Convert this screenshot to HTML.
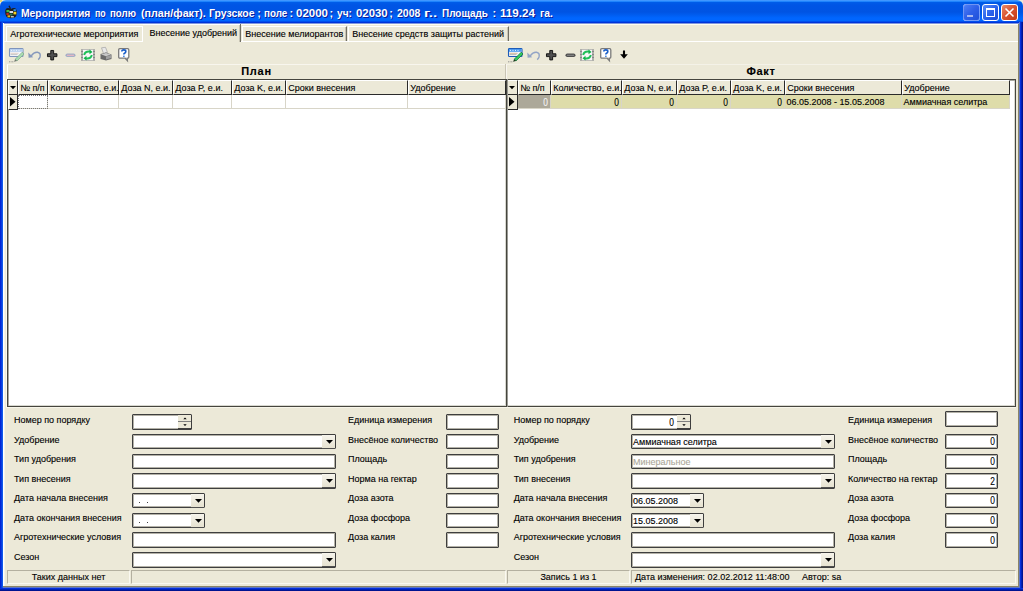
<!DOCTYPE html><html><head><meta charset="utf-8"><style>
html,body{margin:0;padding:0;}
body{width:1023px;height:591px;position:relative;overflow:hidden;background:#ECE9D8;font-family:"Liberation Sans",sans-serif;}
.t{position:absolute;white-space:pre;-webkit-text-stroke:0.12px currentColor;}
.b{position:absolute;box-sizing:border-box;}
svg{position:absolute;overflow:visible;}
</style></head><body>
<div class="b" style="left:0;top:0;width:1023px;height:24px;border-radius:6px 6px 0 0;background:linear-gradient(to bottom,#4A9EFF 0px,#3590FF 1px,#0A78FA 2px,#005CE8 2.5px,#0055E5 5px,#0054E3 12px,#005DF0 15px,#0066FF 18px,#0066FE 21px,#0038DC 22px,#0030D8 22.8px,#8098E0 23.2px,#8098E0 24px);"></div>
<div class="b" style="left:0;top:22px;width:3px;height:569px;background:linear-gradient(to right,#0019CF,#0843E4 60%,#166AEE);"></div>
<div class="b" style="left:1020px;top:22px;width:3px;height:569px;background:linear-gradient(to right,#0838F0,#0020B0 55%,#000C80);"></div>
<div class="b" style="left:1019px;top:22px;width:1px;height:566px;background:#6078C8;"></div>
<div class="b" style="left:0;top:588px;width:1023px;height:3px;background:linear-gradient(to bottom,#0838F0,#0020B0 55%,#000C80);"></div>
<div class="b" style="left:3px;top:587px;width:1017px;height:1px;background:#6078C8;"></div>
<div class="b" style="left:3px;top:24px;width:1016px;height:1px;background:#FFFDF0;"></div>
<div class="b" style="left:3px;top:23px;width:1px;height:564px;background:#FFFFFF;"></div>
<div class="b" style="left:4px;top:25px;width:1px;height:561px;background:#F6F4EA;"></div>
<div class="b" style="left:1018px;top:24px;width:1px;height:563px;background:#8A8468;"></div>
<div class="b" style="left:3px;top:586px;width:1016px;height:1px;background:#8A8468;"></div>
<div class="b" style="left:0;top:0;width:2px;height:2px;background:#E8D870;"></div>
<svg style="left:4px;top:5px" width="14" height="14" viewBox="0 0 14 14">
<path d="M5 0.8 L6.5 3.8" stroke="#1a1a1a" stroke-width="1.3"/>
<path d="M4 3 Q1.2 3 1.2 7 Q1.2 12.5 5 13 Q7 13.3 9 13 Q12.8 12.5 12.8 7.5 Q12.8 3 10 3 Q8 3 7 4 Q6 3 4 3 Z" fill="#1E1E1E"/>
<rect x="2.4" y="5" width="3" height="2.2" fill="#40C040"/>
<rect x="5.5" y="6" width="3.5" height="2" fill="#D8D8E8"/>
<rect x="9.5" y="4.2" width="2.4" height="2" fill="#3090E0"/>
<rect x="9.5" y="6.8" width="2.8" height="2.6" fill="#F0D020"/>
<rect x="2.4" y="8" width="2.4" height="2" fill="#C02818"/>
<rect x="5.5" y="8.5" width="3" height="2" fill="#2A7A50"/>
<rect x="3.5" y="10.3" width="2.5" height="2" fill="#E8B010"/>
<rect x="6.8" y="11" width="3" height="1.5" fill="#B8C0C8"/>
</svg>
<div class="t" style="left:21.3px;top:5px;line-height:16px;font-size:11px;font-weight:bold;color:#fff;text-shadow:1px 1px 0 #0A1E9C;transform:scaleX(0.940);transform-origin:0 50%;-webkit-text-stroke:0;">Мероприятия</div>
<div class="t" style="left:95.0px;top:5px;line-height:16px;font-size:11px;font-weight:bold;color:#fff;text-shadow:1px 1px 0 #0A1E9C;transform:scaleX(0.800);transform-origin:0 50%;-webkit-text-stroke:0;">по</div>
<div class="t" style="left:110.2px;top:5px;line-height:16px;font-size:11px;font-weight:bold;color:#fff;text-shadow:1px 1px 0 #0A1E9C;transform:scaleX(0.881);transform-origin:0 50%;-webkit-text-stroke:0;">полю</div>
<div class="t" style="left:140.6px;top:5px;line-height:16px;font-size:11px;font-weight:bold;color:#fff;text-shadow:1px 1px 0 #0A1E9C;transform:scaleX(0.974);transform-origin:0 50%;-webkit-text-stroke:0;">(план/факт).</div>
<div class="t" style="left:209.3px;top:5px;line-height:16px;font-size:11px;font-weight:bold;color:#fff;text-shadow:1px 1px 0 #0A1E9C;transform:scaleX(0.952);transform-origin:0 50%;-webkit-text-stroke:0;">Грузское</div>
<div class="t" style="left:257.3px;top:5px;line-height:16px;font-size:11px;font-weight:bold;color:#fff;text-shadow:1px 1px 0 #0A1E9C;transform:scaleX(1.000);transform-origin:0 50%;-webkit-text-stroke:0;">;</div>
<div class="t" style="left:263.9px;top:5px;line-height:16px;font-size:11px;font-weight:bold;color:#fff;text-shadow:1px 1px 0 #0A1E9C;transform:scaleX(0.894);transform-origin:0 50%;-webkit-text-stroke:0;">поле</div>
<div class="t" style="left:289.6px;top:5px;line-height:16px;font-size:11px;font-weight:bold;color:#fff;text-shadow:1px 1px 0 #0A1E9C;transform:scaleX(1.000);transform-origin:0 50%;-webkit-text-stroke:0;">:</div>
<div class="t" style="left:295.6px;top:5px;line-height:16px;font-size:11px;font-weight:bold;color:#fff;text-shadow:1px 1px 0 #0A1E9C;transform:scaleX(1.043);transform-origin:0 50%;-webkit-text-stroke:0;">02000</div>
<div class="t" style="left:329.4px;top:5px;line-height:16px;font-size:11px;font-weight:bold;color:#fff;text-shadow:1px 1px 0 #0A1E9C;transform:scaleX(1.000);transform-origin:0 50%;-webkit-text-stroke:0;">;</div>
<div class="t" style="left:336.5px;top:5px;line-height:16px;font-size:11px;font-weight:bold;color:#fff;text-shadow:1px 1px 0 #0A1E9C;transform:scaleX(0.923);transform-origin:0 50%;-webkit-text-stroke:0;">уч:</div>
<div class="t" style="left:355.6px;top:5px;line-height:16px;font-size:11px;font-weight:bold;color:#fff;text-shadow:1px 1px 0 #0A1E9C;transform:scaleX(1.036);transform-origin:0 50%;-webkit-text-stroke:0;">02030</div>
<div class="t" style="left:389.2px;top:5px;line-height:16px;font-size:11px;font-weight:bold;color:#fff;text-shadow:1px 1px 0 #0A1E9C;transform:scaleX(1.000);transform-origin:0 50%;-webkit-text-stroke:0;">;</div>
<div class="t" style="left:397.1px;top:5px;line-height:16px;font-size:11px;font-weight:bold;color:#fff;text-shadow:1px 1px 0 #0A1E9C;transform:scaleX(0.951);transform-origin:0 50%;-webkit-text-stroke:0;">2008</div>
<div class="t" style="left:423.7px;top:5px;line-height:16px;font-size:11px;font-weight:bold;color:#fff;text-shadow:1px 1px 0 #0A1E9C;transform:scaleX(1.379);transform-origin:0 50%;-webkit-text-stroke:0;">г..</div>
<div class="t" style="left:442.1px;top:5px;line-height:16px;font-size:11px;font-weight:bold;color:#fff;text-shadow:1px 1px 0 #0A1E9C;transform:scaleX(0.905);transform-origin:0 50%;-webkit-text-stroke:0;">Площадь</div>
<div class="t" style="left:492.6px;top:5px;line-height:16px;font-size:11px;font-weight:bold;color:#fff;text-shadow:1px 1px 0 #0A1E9C;transform:scaleX(1.000);transform-origin:0 50%;-webkit-text-stroke:0;">:</div>
<div class="t" style="left:499.9px;top:5px;line-height:16px;font-size:11px;font-weight:bold;color:#fff;text-shadow:1px 1px 0 #0A1E9C;transform:scaleX(1.063);transform-origin:0 50%;-webkit-text-stroke:0;">119.24</div>
<div class="t" style="left:539.9px;top:5px;line-height:16px;font-size:11px;font-weight:bold;color:#fff;text-shadow:1px 1px 0 #0A1E9C;transform:scaleX(0.941);transform-origin:0 50%;-webkit-text-stroke:0;">га.</div>
<div class="b" style="left:963px;top:4px;width:17px;height:17px;border-radius:3px;border:1px solid #fff;background:linear-gradient(135deg,#4D7EF5,#2E5FE8 50%,#1F4FD8);"></div>
<div class="b" style="left:967px;top:15px;width:6px;height:2px;background:#A8B8F0;"></div>
<div class="b" style="left:963px;top:4px;width:17px;height:17px;border-radius:3px;border:1px solid rgba(160,190,255,.6);background:linear-gradient(135deg,#4D7EF5,#2E5FE8 50%,#1F4FD8);"></div>
<div class="b" style="left:967px;top:15px;width:6px;height:2px;background:#A8B8F0;"></div>
<div class="b" style="left:982px;top:4px;width:17px;height:17px;border-radius:3px;border:1px solid #fff;background:linear-gradient(135deg,#5A8CF8,#2B63EC 50%,#1A4BD6);"></div>
<div class="b" style="left:986px;top:8px;width:9px;height:9px;border:1px solid #fff;border-top-width:2px;"></div>
<div class="b" style="left:1001px;top:4px;width:17px;height:17px;border-radius:3px;border:1px solid #fff;background:linear-gradient(135deg,#E98A6A,#D8532F 50%,#C23A16);"></div>
<svg style="left:1001px;top:4px" width="17" height="17"><path d="M4.5 4.5 L12.5 12.5 M12.5 4.5 L4.5 12.5" stroke="#fff" stroke-width="1.6"/></svg>
<div class="b" style="left:6px;top:26px;width:137px;height:15px;background:#ECE9D8;border-left:1px solid #fff;border-top:1px solid #fff;border-right:1px solid #fff;"></div>
<div class="t" style="left:10.3px;top:28.38px;line-height:12px;font-size:9px;color:#000;">Агротехнические мероприятия</div>
<div class="b" style="left:242px;top:26px;width:105px;height:15px;background:#ECE9D8;border-left:1px solid #fff;border-top:1px solid #fff;border-right:1px solid #716F64;box-shadow:inset -1px 0 #C8C4B4;"></div>
<div class="t" style="left:245.3px;top:28.38px;line-height:12px;font-size:9px;color:#000;">Внесение мелиорантов</div>
<div class="b" style="left:348px;top:26px;width:161px;height:15px;background:#ECE9D8;border-left:1px solid #fff;border-top:1px solid #fff;border-right:1px solid #716F64;box-shadow:inset -1px 0 #C8C4B4;"></div>
<div class="t" style="left:352.3px;top:28.38px;line-height:12px;font-size:9px;color:#000;">Внесение средств защиты растений</div>
<div class="b" style="left:4px;top:41px;width:1014px;height:1px;background:#FFFFFF;"></div>
<div class="b" style="left:143px;top:24px;width:98px;height:18px;background:#ECE9D8;border-right:1px solid #716F64;box-shadow:inset -1px 0 #C8C4B4;"></div>
<div class="b" style="left:143px;top:24px;width:97px;height:1px;background:#fff;"></div>
<div class="t" style="left:149.5px;top:26.68px;line-height:12px;font-size:9px;color:#000;">Внесение удобрений</div>
<svg style="left:8px;top:47px" width="17" height="16" viewBox="-1 -1 17 16">
<rect x="0.5" y="0.5" width="13.5" height="8" rx="0.8" fill="#F4F6FA" stroke="#7E94BC" stroke-width="1.1"/>
<rect x="1" y="1" width="12.5" height="2.8" fill="#B4CDEE"/>
<circle cx="2.5" cy="2.4" r="0.6" fill="#E8F0FA"/><circle cx="5" cy="2.4" r="0.6" fill="#E8F0FA"/><circle cx="7.5" cy="2.4" r="0.6" fill="#E8F0FA"/><circle cx="10" cy="2.4" r="0.6" fill="#E8F0FA"/>
<rect x="1.5" y="4.8" width="8" height="1" fill="#E0D0C8"/>
<rect x="1.5" y="6.1" width="7" height="1" fill="#C8C8C8"/>
<path d="M6.2 11.2 L13.2 4.2 L15 6 L8 13 Z" fill="#A8DCB0" stroke="#80A888" stroke-width="0.7"/>
<path d="M5 13.8 L6.2 11.2 L8 13 Z" fill="#707870"/>
<path d="M0 13.8 H5" stroke="#808080" stroke-width="0.8" stroke-dasharray="1 0.6"/>
</svg>
<svg style="left:28px;top:50.5px" width="14" height="10" viewBox="0 0 14 10">
<path d="M3.2 4.8 Q6 0.8 9.5 1.2 Q13 1.8 12 6 Q11.6 7.4 10.2 8.6" fill="none" stroke="#8698BC" stroke-width="1.45"/>
<path d="M0.3 1.5 L0.6 6.8 L5.2 6.3 Z" fill="#8698BC"/>
</svg>
<svg style="left:46.5px;top:49.5px" width="10.4" height="10.4" viewBox="0 0 11 11">
<path d="M4 0.5 H7 V4 H10.5 V7 H7 V10.5 H4 V7 H0.5 V4 H4 Z" fill="#505050" stroke="#111" stroke-width="1"/>
</svg>
<svg style="left:65px;top:52.6px" width="11" height="5" viewBox="0 0 11 5">
<rect x="0.5" y="0.5" width="10" height="3.6" rx="1.8" fill="#A4AEC6"/>
<rect x="2" y="1.8" width="7" height="1" fill="#F2B8C4"/>
</svg>
<svg style="left:81px;top:49px" width="14" height="12" viewBox="0 0 14 12">
<rect x="0" y="0" width="14" height="12" fill="#B0B0AC"/>
<rect x="0" y="2" width="2" height="1" fill="#888"/><rect x="0" y="5" width="2" height="1" fill="#888"/><rect x="0" y="8" width="2" height="1" fill="#888"/>
<rect x="12" y="2" width="2" height="1" fill="#888"/><rect x="12" y="5" width="2" height="1" fill="#888"/><rect x="12" y="8" width="2" height="1" fill="#888"/>
<rect x="2" y="0.8" width="10" height="10.4" fill="#F8F6F8"/>
<path d="M3.2 6 Q4 2.5 8 2.6 L9.2 2.6" fill="none" stroke="#20C058" stroke-width="2"/>
<path d="M8.5 0.4 L11.5 3 L8.5 5.2 Z" fill="#10B048"/>
<path d="M10.8 6 Q10 9.5 6 9.4 L4.8 9.4" fill="none" stroke="#20C058" stroke-width="2"/>
<path d="M5.5 6.8 L2.5 9.2 L5.5 11.6 Z" fill="#10B048"/>
</svg>
<svg style="left:100px;top:47px" width="13" height="14" viewBox="0 0 13 14">
<path d="M1.5 0.8 L5.5 0.3 L7.5 5.5 L3.5 6.5 Z" fill="#E8E8E8" stroke="#A0A0A0" stroke-width="0.7"/>
<path d="M0.5 7 L6 5.5 L11.5 7.5 L11.5 12 L6 13.5 L0.5 12 Z" fill="#6A6A6A"/>
<path d="M1 7.2 L6 5.9 L11 7.6 L6 9.2 Z" fill="#C8C8C8"/>
<path d="M6 9.5 L11.2 8 L11.2 11 L6 12.5 Z" fill="#A0A0A0"/>
</svg>
<svg style="left:118px;top:48px" width="13" height="14" viewBox="0 0 13 14">
<path d="M1.8 0.7 H9.6 Q10.8 0.7 10.8 1.9 V9 Q10.8 10.2 9.6 10.2 H9.2 L9.4 12.6 L7.2 10.2 H1.8 Q0.7 10.2 0.7 9 V1.9 Q0.7 0.7 1.8 0.7 Z" fill="#fff" stroke="#7A7A7A" stroke-width="1.3"/>
<path d="M3.8 3.6 Q3.8 1.9 5.8 1.9 Q7.8 1.9 7.8 3.5 Q7.8 4.6 6.6 5.2 Q5.8 5.6 5.8 6.6" fill="none" stroke="#1A5EC8" stroke-width="1.6"/>
<rect x="5.1" y="7.6" width="1.5" height="1.4" fill="#3A7EE0"/>
</svg>
<svg style="left:507px;top:47px" width="17" height="16" viewBox="-1 -1 17 16">
<rect x="0.5" y="0.5" width="13.5" height="8" rx="0.8" fill="#F4F6FA" stroke="#1E5CB8" stroke-width="1.1"/>
<rect x="1" y="1" width="12.5" height="2.8" fill="#4A98F0"/>
<circle cx="2.5" cy="2.4" r="0.6" fill="#D8ECFF"/><circle cx="5" cy="2.4" r="0.6" fill="#D8ECFF"/><circle cx="7.5" cy="2.4" r="0.6" fill="#D8ECFF"/><circle cx="10" cy="2.4" r="0.6" fill="#D8ECFF"/>
<rect x="1.5" y="4.8" width="8" height="1" fill="#D8B898"/>
<rect x="1.5" y="6.1" width="7" height="1" fill="#B8B8B8"/>
<path d="M6.2 11.2 L13.2 4.2 L15 6 L8 13 Z" fill="#30C860" stroke="#107030" stroke-width="0.7"/>
<path d="M5 13.8 L6.2 11.2 L8 13 Z" fill="#1A3A20"/>
<path d="M0 13.8 H5" stroke="#808080" stroke-width="0.8" stroke-dasharray="1 0.6"/>
</svg>
<svg style="left:527px;top:50.5px" width="14" height="10" viewBox="0 0 14 10">
<path d="M3.2 4.8 Q6 0.8 9.5 1.2 Q13 1.8 12 6 Q11.6 7.4 10.2 8.6" fill="none" stroke="#92A4C6" stroke-width="1.45"/>
<path d="M0.3 1.5 L0.6 6.8 L5.2 6.3 Z" fill="#92A4C6"/>
</svg>
<svg style="left:546.3px;top:49.5px" width="10.4" height="10.4" viewBox="0 0 11 11">
<path d="M4 0.5 H7 V4 H10.5 V7 H7 V10.5 H4 V7 H0.5 V4 H4 Z" fill="#505050" stroke="#111" stroke-width="1"/>
</svg>
<svg style="left:565px;top:52.6px" width="11" height="5" viewBox="0 0 11 5">
<rect x="0.5" y="0.5" width="10" height="3.6" rx="1.8" fill="#505050"/>
<rect x="2" y="1.8" width="7" height="1" fill="#8C8C8C"/>
</svg>
<svg style="left:580px;top:49px" width="14" height="12" viewBox="0 0 14 12">
<rect x="0" y="0" width="14" height="12" fill="#B0B0AC"/>
<rect x="0" y="2" width="2" height="1" fill="#888"/><rect x="0" y="5" width="2" height="1" fill="#888"/><rect x="0" y="8" width="2" height="1" fill="#888"/>
<rect x="12" y="2" width="2" height="1" fill="#888"/><rect x="12" y="5" width="2" height="1" fill="#888"/><rect x="12" y="8" width="2" height="1" fill="#888"/>
<rect x="2" y="0.8" width="10" height="10.4" fill="#F8F6F8"/>
<path d="M3.2 6 Q4 2.5 8 2.6 L9.2 2.6" fill="none" stroke="#20C058" stroke-width="2"/>
<path d="M8.5 0.4 L11.5 3 L8.5 5.2 Z" fill="#10B048"/>
<path d="M10.8 6 Q10 9.5 6 9.4 L4.8 9.4" fill="none" stroke="#20C058" stroke-width="2"/>
<path d="M5.5 6.8 L2.5 9.2 L5.5 11.6 Z" fill="#10B048"/>
</svg>
<svg style="left:600px;top:48px" width="13" height="14" viewBox="0 0 13 14">
<path d="M1.8 0.7 H9.6 Q10.8 0.7 10.8 1.9 V9 Q10.8 10.2 9.6 10.2 H9.2 L9.4 12.6 L7.2 10.2 H1.8 Q0.7 10.2 0.7 9 V1.9 Q0.7 0.7 1.8 0.7 Z" fill="#fff" stroke="#7A7A7A" stroke-width="1.3"/>
<path d="M3.8 3.6 Q3.8 1.9 5.8 1.9 Q7.8 1.9 7.8 3.5 Q7.8 4.6 6.6 5.2 Q5.8 5.6 5.8 6.6" fill="none" stroke="#1A5EC8" stroke-width="1.6"/>
<rect x="5.1" y="7.6" width="1.5" height="1.4" fill="#3A7EE0"/>
</svg>
<svg style="left:620px;top:50px" width="9" height="10" viewBox="0 0 9 10">
<path d="M4 0.5 V5" stroke="#000" stroke-width="2.1"/>
<path d="M0.2 4.2 L7.8 4.2 L4 8.7 Z" fill="#000"/>
</svg>
<div class="b" style="left:7px;top:64px;width:499px;height:15px;border-top:1px solid #F8F6EE;border-left:1px solid #fff;"></div>
<div class="t" style="left:7px;top:65.19px;line-height:12px;font-size:11px;color:#000;font-weight:bold;width:499px;text-align:center;letter-spacing:0.7px;">План</div>
<div class="b" style="left:507px;top:64px;width:511px;height:15px;border-top:1px solid #F4F2E8;"></div>
<div class="b" style="left:505px;top:64px;width:1px;height:15px;background:#C8C4B4;"></div>
<div class="b" style="left:506px;top:64px;width:1px;height:15px;background:#F8F6F0;"></div>
<div class="t" style="left:507px;top:65.19px;line-height:12px;font-size:11px;color:#000;font-weight:bold;width:508px;text-align:center;letter-spacing:0.7px;">Факт</div>
<div class="b" style="left:7px;top:79px;width:500px;height:328px;background:#fff;border:1px solid #45453E;box-shadow:inset 1px 1px 0 #A8A8A0, inset -1px -1px 0 #D8D8D0;"></div>
<div class="b" style="left:8px;top:80px;width:10px;height:15px;background:#ECE9D8;border-left:1px solid #fff;border-top:1px solid #fff;border-right:1px solid #2A2A2A;border-bottom:1px solid #2A2A2A;"></div>
<div class="b" style="left:18px;top:80px;width:30px;height:15px;background:#ECE9D8;border-left:1px solid #fff;border-top:1px solid #fff;border-right:1px solid #2A2A2A;border-bottom:1px solid #2A2A2A;"></div>
<div class="t" style="left:20.3px;top:81.78px;line-height:12px;font-size:9px;color:#000;">№ п/п</div>
<div class="b" style="left:48px;top:80px;width:71px;height:15px;background:#ECE9D8;border-left:1px solid #fff;border-top:1px solid #fff;border-right:1px solid #2A2A2A;border-bottom:1px solid #2A2A2A;"></div>
<div class="t" style="left:50.3px;top:81.78px;line-height:12px;font-size:9px;color:#000;">Количество, е.и.</div>
<div class="b" style="left:119px;top:80px;width:54px;height:15px;background:#ECE9D8;border-left:1px solid #fff;border-top:1px solid #fff;border-right:1px solid #2A2A2A;border-bottom:1px solid #2A2A2A;"></div>
<div class="t" style="left:121.3px;top:81.78px;line-height:12px;font-size:9px;color:#000;">Доза N, е.и.</div>
<div class="b" style="left:173px;top:80px;width:59px;height:15px;background:#ECE9D8;border-left:1px solid #fff;border-top:1px solid #fff;border-right:1px solid #2A2A2A;border-bottom:1px solid #2A2A2A;"></div>
<div class="t" style="left:175.3px;top:81.78px;line-height:12px;font-size:9px;color:#000;">Доза P, е.и.</div>
<div class="b" style="left:232px;top:80px;width:54px;height:15px;background:#ECE9D8;border-left:1px solid #fff;border-top:1px solid #fff;border-right:1px solid #2A2A2A;border-bottom:1px solid #2A2A2A;"></div>
<div class="t" style="left:234.3px;top:81.78px;line-height:12px;font-size:9px;color:#000;">Доза K, е.и.</div>
<div class="b" style="left:286px;top:80px;width:122px;height:15px;background:#ECE9D8;border-left:1px solid #fff;border-top:1px solid #fff;border-right:1px solid #2A2A2A;border-bottom:1px solid #2A2A2A;"></div>
<div class="t" style="left:288.3px;top:81.78px;line-height:12px;font-size:9px;color:#000;">Сроки внесения</div>
<div class="b" style="left:408px;top:80px;width:98px;height:15px;background:#ECE9D8;border-left:1px solid #fff;border-top:1px solid #fff;border-right:1px solid #2A2A2A;border-bottom:1px solid #2A2A2A;"></div>
<div class="t" style="left:410.3px;top:81.78px;line-height:12px;font-size:9px;color:#000;">Удобрение</div>
<svg style="left:10px;top:86px" width="6" height="4"><path d="M0 0 H6 L3 3.2 Z" fill="#000"/></svg>
<div class="b" style="left:8px;top:95px;width:10px;height:15px;background:#ECE9D8;border-left:1px solid #fff;border-right:1px solid #2A2A2A;border-bottom:1px solid #2A2A2A;"></div>
<svg style="left:10px;top:97px" width="6" height="10"><path d="M0 0 L5.5 4.8 L0 9.6 Z" fill="#000"/></svg>
<div class="b" style="left:18px;top:95px;width:30px;height:14px;background:#fff;border-right:1px solid #D8D5C8;border-bottom:1px solid #D8D5C8;"></div>
<div class="b" style="left:48px;top:95px;width:71px;height:14px;background:#fff;border-right:1px solid #D8D5C8;border-bottom:1px solid #D8D5C8;"></div>
<div class="b" style="left:119px;top:95px;width:54px;height:14px;background:#fff;border-right:1px solid #D8D5C8;border-bottom:1px solid #D8D5C8;"></div>
<div class="b" style="left:173px;top:95px;width:59px;height:14px;background:#fff;border-right:1px solid #D8D5C8;border-bottom:1px solid #D8D5C8;"></div>
<div class="b" style="left:232px;top:95px;width:54px;height:14px;background:#fff;border-right:1px solid #D8D5C8;border-bottom:1px solid #D8D5C8;"></div>
<div class="b" style="left:286px;top:95px;width:122px;height:14px;background:#fff;border-right:1px solid #D8D5C8;border-bottom:1px solid #D8D5C8;"></div>
<div class="b" style="left:408px;top:95px;width:98px;height:14px;background:#fff;border-right:1px solid #D8D5C8;border-bottom:1px solid #D8D5C8;"></div>
<div class="b" style="left:18px;top:95px;width:30px;height:14px;border:1px dotted #787878;"></div>
<div class="b" style="left:506px;top:79px;width:510px;height:328px;background:#fff;border:1px solid #45453E;box-shadow:inset 1px 1px 0 #A8A8A0, inset -1px -1px 0 #D8D8D0;"></div>
<div class="b" style="left:507px;top:80px;width:11px;height:15px;background:#ECE9D8;border-left:1px solid #fff;border-top:1px solid #fff;border-right:1px solid #2A2A2A;border-bottom:1px solid #2A2A2A;"></div>
<div class="b" style="left:518px;top:80px;width:33px;height:15px;background:#ECE9D8;border-left:1px solid #fff;border-top:1px solid #fff;border-right:1px solid #2A2A2A;border-bottom:1px solid #2A2A2A;"></div>
<div class="t" style="left:520.3px;top:81.78px;line-height:12px;font-size:9px;color:#000;">№ п/п</div>
<div class="b" style="left:551px;top:80px;width:71px;height:15px;background:#ECE9D8;border-left:1px solid #fff;border-top:1px solid #fff;border-right:1px solid #2A2A2A;border-bottom:1px solid #2A2A2A;"></div>
<div class="t" style="left:553.3px;top:81.78px;line-height:12px;font-size:9px;color:#000;">Количество, е.и.</div>
<div class="b" style="left:622px;top:80px;width:55px;height:15px;background:#ECE9D8;border-left:1px solid #fff;border-top:1px solid #fff;border-right:1px solid #2A2A2A;border-bottom:1px solid #2A2A2A;"></div>
<div class="t" style="left:624.3px;top:81.78px;line-height:12px;font-size:9px;color:#000;">Доза N, е.и.</div>
<div class="b" style="left:677px;top:80px;width:54px;height:15px;background:#ECE9D8;border-left:1px solid #fff;border-top:1px solid #fff;border-right:1px solid #2A2A2A;border-bottom:1px solid #2A2A2A;"></div>
<div class="t" style="left:679.3px;top:81.78px;line-height:12px;font-size:9px;color:#000;">Доза P, е.и.</div>
<div class="b" style="left:731px;top:80px;width:54px;height:15px;background:#ECE9D8;border-left:1px solid #fff;border-top:1px solid #fff;border-right:1px solid #2A2A2A;border-bottom:1px solid #2A2A2A;"></div>
<div class="t" style="left:733.3px;top:81.78px;line-height:12px;font-size:9px;color:#000;">Доза K, е.и.</div>
<div class="b" style="left:785px;top:80px;width:117px;height:15px;background:#ECE9D8;border-left:1px solid #fff;border-top:1px solid #fff;border-right:1px solid #2A2A2A;border-bottom:1px solid #2A2A2A;"></div>
<div class="t" style="left:787.3px;top:81.78px;line-height:12px;font-size:9px;color:#000;">Сроки внесения</div>
<div class="b" style="left:902px;top:80px;width:108px;height:15px;background:#ECE9D8;border-left:1px solid #fff;border-top:1px solid #fff;border-right:1px solid #2A2A2A;border-bottom:1px solid #2A2A2A;"></div>
<div class="t" style="left:904.3px;top:81.78px;line-height:12px;font-size:9px;color:#000;">Удобрение</div>
<svg style="left:509px;top:86px" width="6" height="4"><path d="M0 0 H6 L3 3.2 Z" fill="#000"/></svg>
<div class="b" style="left:507px;top:95px;width:11px;height:15px;background:#ECE9D8;border-left:1px solid #fff;border-right:1px solid #2A2A2A;border-bottom:1px solid #2A2A2A;"></div>
<svg style="left:509px;top:97px" width="6" height="10"><path d="M0 0 L5.5 4.8 L0 9.6 Z" fill="#000"/></svg>
<div class="b" style="left:518px;top:95px;width:33px;height:14px;background:#ACA899;border-right:1px solid #D8D5C8;border-bottom:1px solid #D8D5C8;"></div>
<div class="t" style="left:518px;top:96.26px;line-height:12px;font-size:10.5px;color:#F4F4F4;width:30px;text-align:right;transform:scaleX(0.8);transform-origin:100% 50%;">0</div>
<div class="b" style="left:551px;top:95px;width:71px;height:14px;background:#DEDCAA;border-right:1px solid #D8D5C8;border-bottom:1px solid #D8D5C8;"></div>
<div class="t" style="left:551px;top:96.26px;line-height:12px;font-size:10.5px;color:#000;width:68px;text-align:right;transform:scaleX(0.8);transform-origin:100% 50%;">0</div>
<div class="b" style="left:622px;top:95px;width:55px;height:14px;background:#DEDCAA;border-right:1px solid #D8D5C8;border-bottom:1px solid #D8D5C8;"></div>
<div class="t" style="left:622px;top:96.26px;line-height:12px;font-size:10.5px;color:#000;width:52px;text-align:right;transform:scaleX(0.8);transform-origin:100% 50%;">0</div>
<div class="b" style="left:677px;top:95px;width:54px;height:14px;background:#DEDCAA;border-right:1px solid #D8D5C8;border-bottom:1px solid #D8D5C8;"></div>
<div class="t" style="left:677px;top:96.26px;line-height:12px;font-size:10.5px;color:#000;width:51px;text-align:right;transform:scaleX(0.8);transform-origin:100% 50%;">0</div>
<div class="b" style="left:731px;top:95px;width:54px;height:14px;background:#DEDCAA;border-right:1px solid #D8D5C8;border-bottom:1px solid #D8D5C8;"></div>
<div class="t" style="left:731px;top:96.26px;line-height:12px;font-size:10.5px;color:#000;width:51px;text-align:right;transform:scaleX(0.8);transform-origin:100% 50%;">0</div>
<div class="b" style="left:785px;top:95px;width:117px;height:14px;background:#DEDCAA;border-right:1px solid #D8D5C8;border-bottom:1px solid #D8D5C8;"></div>
<div class="t" style="left:786.5px;top:96.48px;line-height:12px;font-size:9px;color:#000;">06.05.2008 - 15.05.2008</div>
<div class="b" style="left:902px;top:95px;width:108px;height:14px;background:#DEDCAA;border-right:1px solid #D8D5C8;border-bottom:1px solid #D8D5C8;"></div>
<div class="t" style="left:903.5px;top:96.48px;line-height:12px;font-size:9px;color:#000;">Аммиачная селитра</div>
<div class="b" style="left:507px;top:79px;width:1px;height:328px;background:#9A9A94;"></div>
<div class="b" style="left:507px;top:95px;width:1px;height:15px;background:#9A9890;"></div>
<div class="b" style="left:6px;top:79px;width:1px;height:329px;background:#FBFAF0;"></div>
<div class="b" style="left:6px;top:407px;width:1010px;height:1px;background:#F8F6EA;"></div>
<div class="t" style="left:14px;top:414.18px;line-height:12px;font-size:9px;color:#000;">Номер по порядку</div>
<div class="t" style="left:14px;top:433.73px;line-height:12px;font-size:9px;color:#000;">Удобрение</div>
<div class="t" style="left:14px;top:453.28px;line-height:12px;font-size:9px;color:#000;">Тип удобрения</div>
<div class="t" style="left:14px;top:472.83px;line-height:12px;font-size:9px;color:#000;">Тип внесения</div>
<div class="t" style="left:14px;top:492.38px;line-height:12px;font-size:9px;color:#000;">Дата начала внесения</div>
<div class="t" style="left:14px;top:511.93px;line-height:12px;font-size:9px;color:#000;">Дата окончания внесения</div>
<div class="t" style="left:14px;top:531.48px;line-height:12px;font-size:9px;color:#000;">Агротехнические условия</div>
<div class="t" style="left:14px;top:551.03px;line-height:12px;font-size:9px;color:#000;">Сезон</div>
<div class="b" style="left:132px;top:414.0px;width:60px;height:15.6px;background:#fff;border:1px solid #3E3E3E;box-shadow:inset 0 0 0 1px #B4B2A8;border-radius:1px;"></div>
<div class="b" style="left:178px;top:415.0px;width:13px;height:7px;background:#ECE9D8;border-bottom:1px solid #808080;"></div>
<div class="b" style="left:178px;top:422.0px;width:13px;height:7px;background:#ECE9D8;border-bottom:1px solid #404040;"></div>
<svg style="left:183px;top:417.0px" width="4" height="3"><path d="M0.3 2.2 H3.7 L2 0.4 Z" fill="#000"/></svg>
<svg style="left:183px;top:424.0px" width="4" height="3"><path d="M0.3 0.3 H3.7 L2 2.1 Z" fill="#000"/></svg>
<div class="b" style="left:132px;top:433.8px;width:204px;height:15.6px;background:#fff;border:1px solid #3E3E3E;box-shadow:inset 0 0 0 1px #B4B2A8;border-radius:1px;"></div>
<div class="b" style="left:322px;top:434.8px;width:13px;height:14px;background:linear-gradient(to bottom,#F6F4EC,#E6E2D0);border-bottom:1px solid #505050;"></div>
<svg style="left:326px;top:439.8px" width="7" height="4"><path d="M0 0 H7 L3.5 3.8 Z" fill="#000"/></svg>
<div class="b" style="left:132px;top:453.5px;width:204px;height:15.6px;background:#fff;border:1px solid #3E3E3E;box-shadow:inset 0 0 0 1px #B4B2A8;border-radius:1px;"></div>
<div class="b" style="left:132px;top:473.2px;width:204px;height:15.6px;background:#fff;border:1px solid #3E3E3E;box-shadow:inset 0 0 0 1px #B4B2A8;border-radius:1px;"></div>
<div class="b" style="left:322px;top:474.2px;width:13px;height:14px;background:linear-gradient(to bottom,#F6F4EC,#E6E2D0);border-bottom:1px solid #505050;"></div>
<svg style="left:326px;top:479.2px" width="7" height="4"><path d="M0 0 H7 L3.5 3.8 Z" fill="#000"/></svg>
<div class="b" style="left:132px;top:492.9px;width:73px;height:15.6px;background:#fff;border:1px solid #3E3E3E;box-shadow:inset 0 0 0 1px #B4B2A8;border-radius:1px;"></div>
<div class="b" style="left:191px;top:493.9px;width:13px;height:14px;background:linear-gradient(to bottom,#F6F4EC,#E6E2D0);border-bottom:1px solid #505050;"></div>
<svg style="left:195px;top:498.9px" width="7" height="4"><path d="M0 0 H7 L3.5 3.8 Z" fill="#000"/></svg>
<div class="b" style="left:132px;top:512.6px;width:73px;height:15.6px;background:#fff;border:1px solid #3E3E3E;box-shadow:inset 0 0 0 1px #B4B2A8;border-radius:1px;"></div>
<div class="b" style="left:191px;top:513.6px;width:13px;height:14px;background:linear-gradient(to bottom,#F6F4EC,#E6E2D0);border-bottom:1px solid #505050;"></div>
<svg style="left:195px;top:518.6px" width="7" height="4"><path d="M0 0 H7 L3.5 3.8 Z" fill="#000"/></svg>
<div class="b" style="left:132px;top:532.3px;width:204px;height:15.6px;background:#fff;border:1px solid #3E3E3E;box-shadow:inset 0 0 0 1px #B4B2A8;border-radius:1px;"></div>
<div class="b" style="left:132px;top:552.0px;width:204px;height:15.6px;background:#fff;border:1px solid #3E3E3E;box-shadow:inset 0 0 0 1px #B4B2A8;border-radius:1px;"></div>
<div class="b" style="left:322px;top:553.0px;width:13px;height:14px;background:linear-gradient(to bottom,#F6F4EC,#E6E2D0);border-bottom:1px solid #505050;"></div>
<svg style="left:326px;top:558.0px" width="7" height="4"><path d="M0 0 H7 L3.5 3.8 Z" fill="#000"/></svg>
<div class="b" style="left:139px;top:501.9px;width:1px;height:1px;background:#404040;"></div>
<div class="b" style="left:147px;top:501.9px;width:1px;height:1px;background:#404040;"></div>
<div class="b" style="left:139px;top:521.6px;width:1px;height:1px;background:#404040;"></div>
<div class="b" style="left:147px;top:521.6px;width:1px;height:1px;background:#404040;"></div>
<div class="t" style="left:513.7px;top:414.18px;line-height:12px;font-size:9px;color:#000;">Номер по порядку</div>
<div class="t" style="left:513.7px;top:433.73px;line-height:12px;font-size:9px;color:#000;">Удобрение</div>
<div class="t" style="left:513.7px;top:453.28px;line-height:12px;font-size:9px;color:#000;">Тип удобрения</div>
<div class="t" style="left:513.7px;top:472.83px;line-height:12px;font-size:9px;color:#000;">Тип внесения</div>
<div class="t" style="left:513.7px;top:492.38px;line-height:12px;font-size:9px;color:#000;">Дата начала внесения</div>
<div class="t" style="left:513.7px;top:511.93px;line-height:12px;font-size:9px;color:#000;">Дата окончания внесения</div>
<div class="t" style="left:513.7px;top:531.48px;line-height:12px;font-size:9px;color:#000;">Агротехнические условия</div>
<div class="t" style="left:513.7px;top:551.03px;line-height:12px;font-size:9px;color:#000;">Сезон</div>
<div class="b" style="left:631px;top:414.0px;width:60px;height:15.6px;background:#fff;border:1px solid #3E3E3E;box-shadow:inset 0 0 0 1px #B4B2A8;border-radius:1px;"></div>
<div class="b" style="left:677px;top:415.0px;width:13px;height:7px;background:#ECE9D8;border-bottom:1px solid #808080;"></div>
<div class="b" style="left:677px;top:422.0px;width:13px;height:7px;background:#ECE9D8;border-bottom:1px solid #404040;"></div>
<svg style="left:682px;top:417.0px" width="4" height="3"><path d="M0.3 2.2 H3.7 L2 0.4 Z" fill="#000"/></svg>
<svg style="left:682px;top:424.0px" width="4" height="3"><path d="M0.3 0.3 H3.7 L2 2.1 Z" fill="#000"/></svg>
<div class="b" style="left:631px;top:433.8px;width:204px;height:15.6px;background:#fff;border:1px solid #3E3E3E;box-shadow:inset 0 0 0 1px #B4B2A8;border-radius:1px;"></div>
<div class="b" style="left:821px;top:434.8px;width:13px;height:14px;background:linear-gradient(to bottom,#F6F4EC,#E6E2D0);border-bottom:1px solid #505050;"></div>
<svg style="left:825px;top:439.8px" width="7" height="4"><path d="M0 0 H7 L3.5 3.8 Z" fill="#000"/></svg>
<div class="b" style="left:631px;top:453.5px;width:204px;height:15.6px;background:#fff;border:1px solid #3E3E3E;box-shadow:inset 0 0 0 1px #B4B2A8;border-radius:1px;"></div>
<div class="b" style="left:631px;top:473.2px;width:204px;height:15.6px;background:#fff;border:1px solid #3E3E3E;box-shadow:inset 0 0 0 1px #B4B2A8;border-radius:1px;"></div>
<div class="b" style="left:821px;top:474.2px;width:13px;height:14px;background:linear-gradient(to bottom,#F6F4EC,#E6E2D0);border-bottom:1px solid #505050;"></div>
<svg style="left:825px;top:479.2px" width="7" height="4"><path d="M0 0 H7 L3.5 3.8 Z" fill="#000"/></svg>
<div class="b" style="left:631px;top:492.9px;width:73px;height:15.6px;background:#fff;border:1px solid #3E3E3E;box-shadow:inset 0 0 0 1px #B4B2A8;border-radius:1px;"></div>
<div class="b" style="left:690px;top:493.9px;width:13px;height:14px;background:linear-gradient(to bottom,#F6F4EC,#E6E2D0);border-bottom:1px solid #505050;"></div>
<svg style="left:694px;top:498.9px" width="7" height="4"><path d="M0 0 H7 L3.5 3.8 Z" fill="#000"/></svg>
<div class="b" style="left:631px;top:512.6px;width:73px;height:15.6px;background:#fff;border:1px solid #3E3E3E;box-shadow:inset 0 0 0 1px #B4B2A8;border-radius:1px;"></div>
<div class="b" style="left:690px;top:513.6px;width:13px;height:14px;background:linear-gradient(to bottom,#F6F4EC,#E6E2D0);border-bottom:1px solid #505050;"></div>
<svg style="left:694px;top:518.6px" width="7" height="4"><path d="M0 0 H7 L3.5 3.8 Z" fill="#000"/></svg>
<div class="b" style="left:631px;top:532.3px;width:204px;height:15.6px;background:#fff;border:1px solid #3E3E3E;box-shadow:inset 0 0 0 1px #B4B2A8;border-radius:1px;"></div>
<div class="b" style="left:631px;top:552.0px;width:204px;height:15.6px;background:#fff;border:1px solid #3E3E3E;box-shadow:inset 0 0 0 1px #B4B2A8;border-radius:1px;"></div>
<div class="b" style="left:821px;top:553.0px;width:13px;height:14px;background:linear-gradient(to bottom,#F6F4EC,#E6E2D0);border-bottom:1px solid #505050;"></div>
<svg style="left:825px;top:558.0px" width="7" height="4"><path d="M0 0 H7 L3.5 3.8 Z" fill="#000"/></svg>
<div class="t" style="left:631px;top:415.56px;line-height:12px;font-size:10.5px;color:#000;width:43px;text-align:right;transform:scaleX(0.8);transform-origin:100% 50%;">0</div>
<div class="t" style="left:633px;top:436.18px;line-height:12px;font-size:9px;color:#000;">Аммиачная селитра</div>
<div class="t" style="left:633px;top:455.88px;line-height:12px;font-size:9px;color:#ACA899;">Минеральное</div>
<div class="t" style="left:633px;top:495.28px;line-height:12px;font-size:9px;color:#000;">06.05.2008</div>
<div class="t" style="left:633px;top:514.98px;line-height:12px;font-size:9px;color:#000;">15.05.2008</div>
<div class="t" style="left:348px;top:414.18px;line-height:12px;font-size:9px;color:#000;">Единица измерения</div>
<div class="t" style="left:348px;top:433.73px;line-height:12px;font-size:9px;color:#000;">Внесёное количество</div>
<div class="t" style="left:348px;top:453.28px;line-height:12px;font-size:9px;color:#000;">Площадь</div>
<div class="t" style="left:348px;top:472.83px;line-height:12px;font-size:9px;color:#000;">Норма на гектар</div>
<div class="t" style="left:348px;top:492.38px;line-height:12px;font-size:9px;color:#000;">Доза азота</div>
<div class="t" style="left:348px;top:511.93px;line-height:12px;font-size:9px;color:#000;">Доза фосфора</div>
<div class="t" style="left:348px;top:531.48px;line-height:12px;font-size:9px;color:#000;">Доза калия</div>
<div class="b" style="left:446px;top:414px;width:53px;height:15.6px;background:#fff;border:1px solid #3E3E3E;box-shadow:inset 0 0 0 1px #B4B2A8;border-radius:1px;"></div>
<div class="b" style="left:446px;top:433.8px;width:53px;height:15.6px;background:#fff;border:1px solid #3E3E3E;box-shadow:inset 0 0 0 1px #B4B2A8;border-radius:1px;"></div>
<div class="b" style="left:446px;top:453.5px;width:53px;height:15.6px;background:#fff;border:1px solid #3E3E3E;box-shadow:inset 0 0 0 1px #B4B2A8;border-radius:1px;"></div>
<div class="b" style="left:446px;top:473.2px;width:53px;height:15.6px;background:#fff;border:1px solid #3E3E3E;box-shadow:inset 0 0 0 1px #B4B2A8;border-radius:1px;"></div>
<div class="b" style="left:446px;top:492.9px;width:53px;height:15.6px;background:#fff;border:1px solid #3E3E3E;box-shadow:inset 0 0 0 1px #B4B2A8;border-radius:1px;"></div>
<div class="b" style="left:446px;top:512.6px;width:53px;height:15.6px;background:#fff;border:1px solid #3E3E3E;box-shadow:inset 0 0 0 1px #B4B2A8;border-radius:1px;"></div>
<div class="b" style="left:446px;top:532.3px;width:53px;height:15.6px;background:#fff;border:1px solid #3E3E3E;box-shadow:inset 0 0 0 1px #B4B2A8;border-radius:1px;"></div>
<div class="t" style="left:848px;top:414.18px;line-height:12px;font-size:9px;color:#000;">Единица измерения</div>
<div class="t" style="left:848px;top:433.73px;line-height:12px;font-size:9px;color:#000;">Внесёное количество</div>
<div class="t" style="left:848px;top:453.28px;line-height:12px;font-size:9px;color:#000;">Площадь</div>
<div class="t" style="left:848px;top:472.83px;line-height:12px;font-size:9px;color:#000;">Количество на гектар</div>
<div class="t" style="left:848px;top:492.38px;line-height:12px;font-size:9px;color:#000;">Доза азота</div>
<div class="t" style="left:848px;top:511.93px;line-height:12px;font-size:9px;color:#000;">Доза фосфора</div>
<div class="t" style="left:848px;top:531.48px;line-height:12px;font-size:9px;color:#000;">Доза калия</div>
<div class="b" style="left:945px;top:411px;width:53px;height:15.6px;background:#fff;border:1px solid #3E3E3E;box-shadow:inset 0 0 0 1px #B4B2A8;border-radius:1px;"></div>
<div class="b" style="left:945px;top:433.8px;width:53px;height:15.6px;background:#fff;border:1px solid #3E3E3E;box-shadow:inset 0 0 0 1px #B4B2A8;border-radius:1px;"></div>
<div class="t" style="left:945px;top:435.36px;line-height:12px;font-size:10.5px;color:#000;width:50px;text-align:right;transform:scaleX(0.8);transform-origin:100% 50%;">0</div>
<div class="b" style="left:945px;top:453.5px;width:53px;height:15.6px;background:#fff;border:1px solid #3E3E3E;box-shadow:inset 0 0 0 1px #B4B2A8;border-radius:1px;"></div>
<div class="t" style="left:945px;top:455.06px;line-height:12px;font-size:10.5px;color:#000;width:50px;text-align:right;transform:scaleX(0.8);transform-origin:100% 50%;">0</div>
<div class="b" style="left:945px;top:473.2px;width:53px;height:15.6px;background:#fff;border:1px solid #3E3E3E;box-shadow:inset 0 0 0 1px #B4B2A8;border-radius:1px;"></div>
<div class="t" style="left:945px;top:474.76px;line-height:12px;font-size:10.5px;color:#000;width:50px;text-align:right;transform:scaleX(0.8);transform-origin:100% 50%;">2</div>
<div class="b" style="left:945px;top:492.9px;width:53px;height:15.6px;background:#fff;border:1px solid #3E3E3E;box-shadow:inset 0 0 0 1px #B4B2A8;border-radius:1px;"></div>
<div class="t" style="left:945px;top:494.46px;line-height:12px;font-size:10.5px;color:#000;width:50px;text-align:right;transform:scaleX(0.8);transform-origin:100% 50%;">0</div>
<div class="b" style="left:945px;top:512.6px;width:53px;height:15.6px;background:#fff;border:1px solid #3E3E3E;box-shadow:inset 0 0 0 1px #B4B2A8;border-radius:1px;"></div>
<div class="t" style="left:945px;top:514.16px;line-height:12px;font-size:10.5px;color:#000;width:50px;text-align:right;transform:scaleX(0.8);transform-origin:100% 50%;">0</div>
<div class="b" style="left:945px;top:532.3px;width:53px;height:15.6px;background:#fff;border:1px solid #3E3E3E;box-shadow:inset 0 0 0 1px #B4B2A8;border-radius:1px;"></div>
<div class="t" style="left:945px;top:533.86px;line-height:12px;font-size:10.5px;color:#000;width:50px;text-align:right;transform:scaleX(0.8);transform-origin:100% 50%;">0</div>
<div class="b" style="left:7px;top:570px;width:123px;height:14px;border-top:1px solid #B4B0A0;border-left:1px solid #B4B0A0;border-bottom:1px solid #FAF8F0;border-right:1px solid #FAF8F0;"></div>
<div class="b" style="left:131px;top:570px;width:375px;height:14px;border-top:1px solid #B4B0A0;border-left:1px solid #B4B0A0;border-bottom:1px solid #FAF8F0;border-right:1px solid #FAF8F0;"></div>
<div class="b" style="left:507px;top:570px;width:123px;height:14px;border-top:1px solid #B4B0A0;border-left:1px solid #B4B0A0;border-bottom:1px solid #FAF8F0;border-right:1px solid #FAF8F0;"></div>
<div class="b" style="left:631px;top:570px;width:385px;height:14px;border-top:1px solid #B4B0A0;border-left:1px solid #B4B0A0;border-bottom:1px solid #FAF8F0;border-right:1px solid #FAF8F0;"></div>
<div class="t" style="left:7px;top:571.38px;line-height:12px;font-size:9px;color:#000;width:123px;text-align:center;">Таких данных нет</div>
<div class="t" style="left:507px;top:571.38px;line-height:12px;font-size:9px;color:#000;width:123px;text-align:center;">Запись 1 из 1</div>
<div class="t" style="left:635px;top:571.38px;line-height:12px;font-size:9px;color:#000;">Дата изменения: 02.02.2012 11:48:00     Автор: sa</div>
</body></html>
